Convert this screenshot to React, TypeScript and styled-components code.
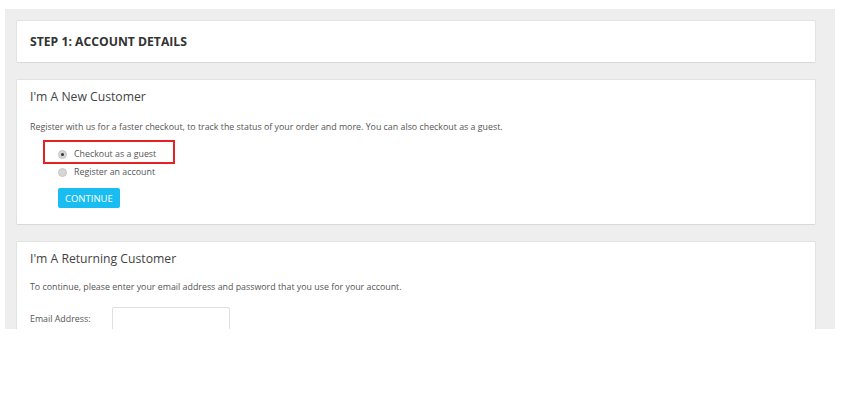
import React, { useState } from 'react';
import styled, { createGlobalStyle } from 'styled-components';

const Global = createGlobalStyle`
  html, body {
    margin: 0;
    padding: 0;
    background: #fff;
    font-family: "Open Sans", "Liberation Sans", sans-serif;
  }
`;

const Page = styled.div`
  padding: 9px 10px 0 5px;
`;

const Panel = styled.div`
  height: 320px;
  overflow: hidden;
  background: #eeeeee;
  padding: 11px 19px 0 11px;
  box-sizing: border-box;
  display: flex;
  flex-direction: column;
  gap: 16px;
`;

const Card = styled.div<{ $pad?: string }>`
  background: #fff;
  border: 1px solid #e2e2e2;
  border-bottom-color: #d8d8d8;
  border-radius: 2px;
  padding: ${(p) => p.$pad || '0 13px'};
  flex-shrink: 0;
`;

const StepTitle = styled.h2`
  margin: 0;
  height: 41px;
  line-height: 42px;
  font-size: 12.2px;
  font-weight: 700;
  color: #333;
`;

const Title = styled.h3`
  margin: 0;
  font-size: 12.2px;
  font-weight: 400;
  color: #444;
  line-height: 18px;
`;

const Text = styled.p<{ $top: number }>`
  margin: ${(p) => p.$top}px 0 0;
  font-size: 8.85px;
  color: #555;
  line-height: 12px;
`;

const Options = styled.div`
  display: flex;
  flex-direction: column;
  gap: 6px;
  padding-left: 28px;
  margin-top: 15px;
`;

const Option = styled.label<{ $mark?: boolean }>`
  display: flex;
  align-items: center;
  gap: 7px;
  font-size: 8.85px;
  color: #555;
  height: 12px;
  position: relative;
  cursor: pointer;
  &::before {
    content: '';
    display: ${(p) => (p.$mark ? 'block' : 'none')};
    position: absolute;
    left: -15px;
    top: -8px;
    width: 128px;
    height: 20px;
    border: 2px solid #e52222;
  }
`;

const Radio = styled.span<{ $on: boolean }>`
  width: 9px;
  height: 9px;
  border-radius: 50%;
  background: #d6d6d6;
  border: 1px solid #c8c8c8;
  box-sizing: border-box;
  display: flex;
  align-items: center;
  justify-content: center;
  &::after {
    content: '';
    width: 3px;
    height: 3px;
    border-radius: 50%;
    background: ${(p) => (p.$on ? '#333' : 'transparent')};
  }
`;

const Button = styled.button`
  margin: 10px 0 0 28px;
  align-self: flex-start;
  background: #19bdf2;
  color: #fff;
  border: none;
  border-radius: 2px;
  font-family: inherit;
  font-size: 9.5px;
  height: 20px;
  padding: 0 7px;
  cursor: pointer;
`;

const Body = styled.div`
  display: flex;
  flex-direction: column;
`;

const FieldRow = styled.div`
  display: flex;
  align-items: flex-start;
  margin-top: 14px;
`;

const FieldLabel = styled.span`
  width: 82px;
  font-size: 8.85px;
  color: #555;
  padding-top: 6px;
`;

const Input = styled.input`
  width: 118px;
  height: 26px;
  box-sizing: border-box;
  border: 1px solid #e0e0e0;
  border-radius: 2px;
  outline: none;
`;

export default function App() {
  const [mode, setMode] = useState<'guest' | 'register'>('guest');

  return (
    <>
      <Global />
      <Page>
        <Panel>
          <Card>
            <StepTitle>STEP 1: ACCOUNT DETAILS</StepTitle>
          </Card>

          <Card $pad="8px 13px 16px">
            <Body>
              <Title>I'm A New Customer</Title>
              <Text $top={15}>
                Register with us for a faster checkout, to track the status of your order and more. You can also checkout as a guest.
              </Text>
              <Options>
                <Option $mark onClick={() => setMode('guest')}>
                  <Radio $on={mode === 'guest'} />
                  Checkout as a guest
                </Option>
                <Option onClick={() => setMode('register')}>
                  <Radio $on={mode === 'register'} />
                  Register an account
                </Option>
              </Options>
              <Button>CONTINUE</Button>
            </Body>
          </Card>

          <Card $pad="8px 13px 20px">
            <Body>
              <Title>I'm A Returning Customer</Title>
              <Text $top={13}>
                To continue, please enter your email address and password that you use for your account.
              </Text>
              <FieldRow>
                <FieldLabel>Email Address:</FieldLabel>
                <Input />
              </FieldRow>
            </Body>
          </Card>
        </Panel>
      </Page>
    </>
  );
}
